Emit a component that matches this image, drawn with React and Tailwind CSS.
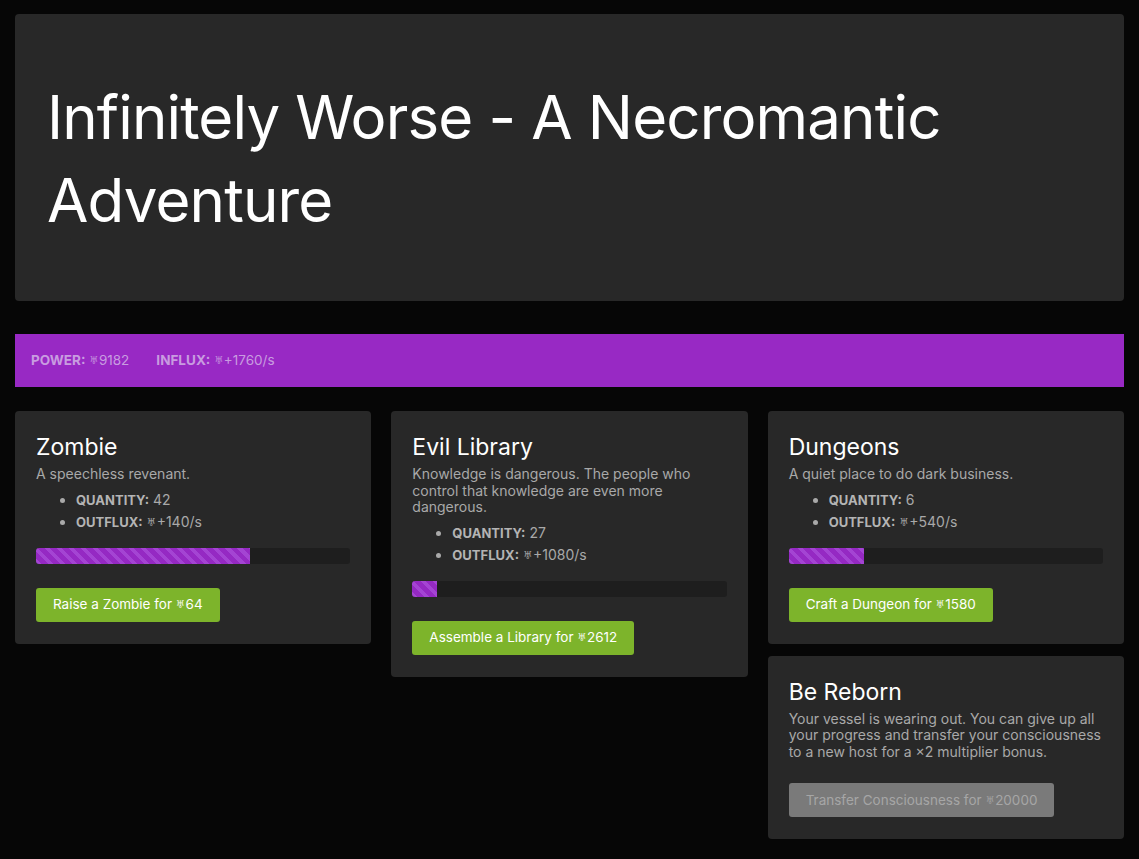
import React from 'react';

const SIGIL = '\u2645';

const minions = [
  {
    name: 'Zombie',
    blurb: 'A speechless revenant.',
    quantity: 42,
    outflux: 140,
    progress: 68,
    action: 'Raise a Zombie',
    cost: 64,
  },
  {
    name: 'Evil Library',
    blurb: 'Knowledge is dangerous. The people who control that knowledge are even more dangerous.',
    quantity: 27,
    outflux: 1080,
    progress: 8,
    action: 'Assemble a Library',
    cost: 2612,
  },
  {
    name: 'Dungeons',
    blurb: 'A quiet place to do dark business.',
    quantity: 6,
    outflux: 540,
    progress: 24,
    action: 'Craft a Dungeon',
    cost: 1580,
  },
];

function Sigil() {
  return <span className="text-[0.8em] align-[1px] opacity-90">{SIGIL}</span>;
}

function Stat({ label, children }) {
  return (
    <span className="mr-[27px]">
      <span className="font-bold">{label}:</span> {children}
    </span>
  );
}

function Card({ title, blurb, children }) {
  return (
    <div className="bg-[#282828] rounded-[4px] px-[21px] pt-[22px] pb-[22px]">
      <h2 className="text-[23px] leading-7 text-white">{title}</h2>
      <p className="mt-[5px] text-[14px] leading-[16.5px] text-[#a9a9a9]">{blurb}</p>
      {children}
    </div>
  );
}

function MinionCard({ m }) {
  return (
    <Card title={m.name} blurb={m.blurb}>
      <ul className="mt-[6px] pl-10 list-disc text-[14px] leading-[21px] text-[#a9a9a9] marker:text-[#a9a9a9]">
        <li>
          <span className="font-bold text-[13px] text-[#b4b4b4]">QUANTITY:</span> {m.quantity}
        </li>
        <li>
          <span className="font-bold text-[13px] text-[#b4b4b4]">OUTFLUX:</span> <Sigil />+{m.outflux}/s
        </li>
      </ul>
      <div className="mt-[15px] h-4 rounded-[3px] bg-[#1e1e1e] overflow-hidden">
        <div
          className="h-full bg-[repeating-linear-gradient(45deg,#a444d3_0px,#a444d3_4px,#9529c3_4px,#9529c3_8.5px)]"
          style={{ width: `${m.progress}%` }}
        />
      </div>
      <button className="mt-6 h-[34px] px-[17px] rounded-[3px] bg-[#7db42b] text-[13.5px] text-white">
        {m.action} for <Sigil />{m.cost}
      </button>
    </Card>
  );
}

export default function App() {
  return (
    <div
      className="min-h-screen bg-[#060606] px-[15px] pt-[14px] pb-5"
      style={{ fontFamily: 'Inter, "Noto Sans", "DejaVu Sans", sans-serif' }}
    >
      <header className="bg-[#282828] rounded-[4px] px-8 pt-[62px] pb-[59px]">
        <h1 className="text-[60px] leading-[83px] text-white tracking-[-0.85px]">
          Infinitely Worse - A Necromantic Adventure
        </h1>
      </header>

      <div className="mt-[33px] h-[53px] bg-[#9829c4] flex items-center px-4 text-[13.5px] text-[#c89ce0]">
        <Stat label="POWER">
          <Sigil />9182
        </Stat>
        <Stat label="INFLUX">
          <Sigil />+1760/s
        </Stat>
      </div>

      <div className="mt-6 grid grid-cols-3 gap-5 items-start">
        <MinionCard m={minions[0]} />
        <MinionCard m={minions[1]} />
        <div className="flex flex-col gap-3">
          <MinionCard m={minions[2]} />
          <Card
            title="Be Reborn"
            blurb="Your vessel is wearing out. You can give up all your progress and transfer your consciousness to a new host for a ×2 multiplier bonus."
          >
            <button className="mt-[23px] h-[34px] px-[17px] rounded-[3px] bg-[#7a7a7a] text-[13.5px] text-[#a6a6a6]">
              Transfer Consciousness for <Sigil />20000
            </button>
          </Card>
        </div>
      </div>
    </div>
  );
}
